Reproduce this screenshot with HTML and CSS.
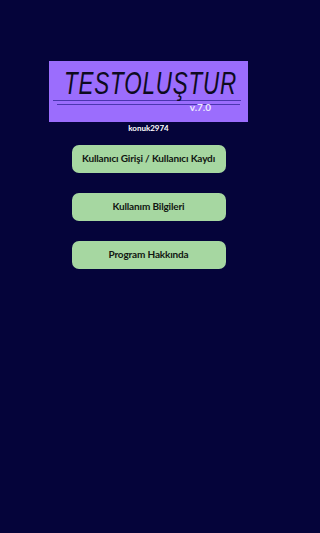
FILE: index.html
```html
<!DOCTYPE html>
<html lang="tr">
<head>
<meta charset="utf-8">
<title>TESTOLUŞTUR</title>
<link rel="stylesheet" href="styles.css">
</head>
<body>
<main class="screen">
  <header class="logo">
    <div class="logo-title"><span class="logo-text">TESTOLUŞTUR</span></div>
    <div class="logo-line logo-line-1"></div>
    <div class="logo-line logo-line-2"></div>
    <div class="logo-version">v.7.0</div>
  </header>
  <div class="user">konuk2974</div>
  <nav class="menu">
    <button class="menu-btn">Kullanıcı Girişi / Kullanıcı Kaydı</button>
    <button class="menu-btn">Kullanım Bilgileri</button>
    <button class="menu-btn">Program Hakkında</button>
  </nav>
</main>
</body>
</html>
```
FILE: styles.css
```css
html, body {
  margin: 0;
  padding: 0;
  height: 100%;
  background: #05043a;
}
.screen {
  width: 199px;
  margin-left: 49px;
  padding-top: 61px;
  display: flex;
  flex-direction: column;
  align-items: center;
  font-family: Lato, "Liberation Sans", sans-serif;
}
.logo {
  align-self: stretch;
  height: 61px;
  background: #9b6dfd;
  display: flex;
  flex-direction: column;
  overflow: hidden;
}
.logo-title {
  margin: 6px 0 0 15px;
  height: 32px;
  white-space: nowrap;
}
.logo-text {
  display: inline-block;
  font-family: "Liberation Sans", Arial, sans-serif;
  font-style: italic;
  font-weight: normal;
  font-size: 32px;
  line-height: 32px;
  letter-spacing: 1.2px;
  color: #0d0b1e;
  transform: scaleX(0.7);
  transform-origin: left center;
}
.logo-line {
  height: 1px;
  background: #4a36b0;
}
.logo-line-1 {
  margin: 1px 7px 0 4px;
}
.logo-line-2 {
  margin: 3px 8px 0 8px;
}
.logo-version {
  align-self: flex-end;
  margin: -3px 37px 0 0;
  font-weight: bold;
  font-size: 10px;
  line-height: 10px;
  color: #ece8ff;
}
.user {
  margin-top: 2px;
  font-weight: bold;
  font-size: 8px;
  line-height: 8px;
  color: #ffffff;
}
.menu {
  margin-top: 13px;
  display: flex;
  flex-direction: column;
  gap: 20px;
}
.menu-btn {
  width: 154px;
  height: 28px;
  border: none;
  border-radius: 7px;
  background: #a6d7a1;
  color: #111611;
  font-family: Lato, "Liberation Sans", sans-serif;
  font-weight: bold;
  font-size: 10px;
  line-height: 12px;
  letter-spacing: -0.15px;
  margin: 0;
  padding: 0 0 2px 0;
}
```
